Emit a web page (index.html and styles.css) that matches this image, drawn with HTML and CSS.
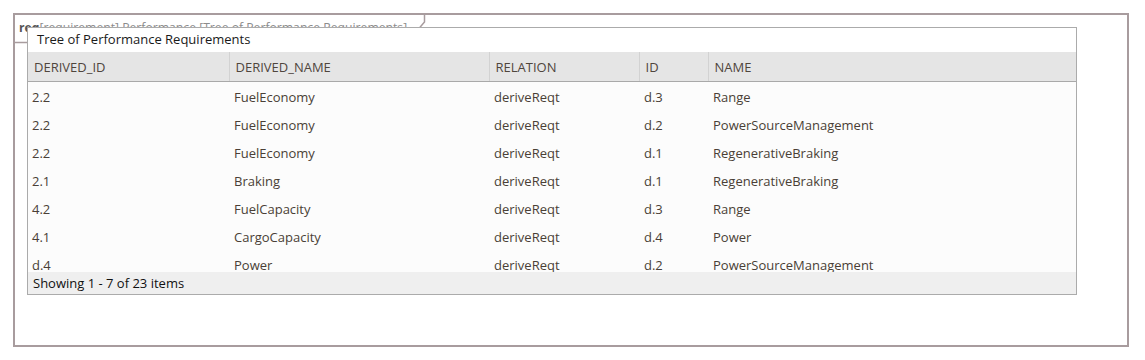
FILE: index.html
```html
<!DOCTYPE html>
<html lang="en">
<head>
  <meta charset="UTF-8">
  <title>Tree of Performance Requirements</title>
  <link rel="stylesheet" href="styles.css">
</head>
<body>
  <div class="frame">
    <div class="frame-tab">
      <svg class="tab-outline" width="420" height="30" viewBox="0 0 420 30">
        <polyline points="0,27.5 392,27.5 409.5,7 409.5,0" fill="none" stroke="#a89c9e" stroke-width="1.5"/>
      </svg>
      <span class="tab-kind">req</span><span class="tab-name">[requirement] Performance [Tree of Performance Requirements]</span>
    </div>

    <div class="panel">
      <div class="panel-title">Tree of Performance Requirements</div>
      <table class="grid">
        <colgroup>
          <col class="c1"><col class="c2"><col class="c3"><col class="c4"><col class="c5">
        </colgroup>
        <thead>
          <tr>
            <th>DERIVED_ID</th>
            <th>DERIVED_NAME</th>
            <th>RELATION</th>
            <th>ID</th>
            <th>NAME</th>
          </tr>
        </thead>
      </table>
      <div class="grid-body">
        <table class="grid">
          <colgroup>
            <col class="c1"><col class="c2"><col class="c3"><col class="c4"><col class="c5">
          </colgroup>
          <tbody>
            <tr><td>2.2</td><td>FuelEconomy</td><td>deriveReqt</td><td>d.3</td><td>Range</td></tr>
            <tr><td>2.2</td><td>FuelEconomy</td><td>deriveReqt</td><td>d.2</td><td>PowerSourceManagement</td></tr>
            <tr><td>2.2</td><td>FuelEconomy</td><td>deriveReqt</td><td>d.1</td><td>RegenerativeBraking</td></tr>
            <tr><td>2.1</td><td>Braking</td><td>deriveReqt</td><td>d.1</td><td>RegenerativeBraking</td></tr>
            <tr><td>4.2</td><td>FuelCapacity</td><td>deriveReqt</td><td>d.3</td><td>Range</td></tr>
            <tr><td>4.1</td><td>CargoCapacity</td><td>deriveReqt</td><td>d.4</td><td>Power</td></tr>
            <tr><td>d.4</td><td>Power</td><td>deriveReqt</td><td>d.2</td><td>PowerSourceManagement</td></tr>
          </tbody>
        </table>
      </div>
      <div class="panel-footer">Showing 1 - 7 of 23 items</div>
    </div>
  </div>
</body>
</html>
```

FILE: styles.css
```css
body {
  margin: 0;
  padding: 0;
  background-color: #ffffff;
  font-family: "Open Sans", "Noto Sans", sans-serif;
}
.frame {
  position: relative;
  margin: 13px 0 0 13px;
  width: 1100px;
  height: 318px;
  border: 2px solid #a89c9e;
  padding: 12px 0 0 12px;
  box-sizing: content-box;
}
.frame-tab {
  position: absolute;
  left: 4px;
  top: 5px;
  font-size: 12.2px;
  line-height: 16px;
  color: #8c8c8c;
  white-space: nowrap;
}
.tab-outline {
  position: absolute;
  left: -4px;
  top: -5px;
}
.tab-kind {
  font-weight: bold;
  color: #555555;
}
.panel {
  position: relative;
  z-index: 1;
  width: 1048px;
  border: 1px solid #ababab;
  background-color: #ffffff;
}
.panel-title {
  height: 24px;
  line-height: 22px;
  padding-left: 9px;
  font-size: 13px;
  color: #1a1a1a;
}
.grid {
  width: 100%;
  border-collapse: collapse;
  table-layout: fixed;
  font-size: 13px;
}
.grid .c1 { width: 201px; }
.grid .c2 { width: 260px; }
.grid .c3 { width: 150px; }
.grid .c4 { width: 69px; }
.grid th {
  height: 29px;
  padding: 0 0 0 6px;
  text-align: left;
  font-weight: normal;
  color: #4f453d;
  background-color: #e5e5e5;
  border-bottom: 1px solid #a9a9a9;
  border-left: 1px solid #d2d2d2;
}
.grid th:first-child {
  border-left: none;
}
.grid-body {
  height: 190px;
  padding-top: 1px;
  box-sizing: border-box;
  overflow: hidden;
  background-color: #fcfcfc;
}
.grid td {
  height: 28px;
  padding: 0 0 0 5px;
  color: #4a3f36;
  white-space: nowrap;
}
.grid td:first-child {
  padding-left: 4px;
}
.panel-footer {
  height: 22px;
  line-height: 23px;
  padding-left: 5px;
  font-size: 13px;
  color: #111111;
  background-color: #efefef;
}
```
